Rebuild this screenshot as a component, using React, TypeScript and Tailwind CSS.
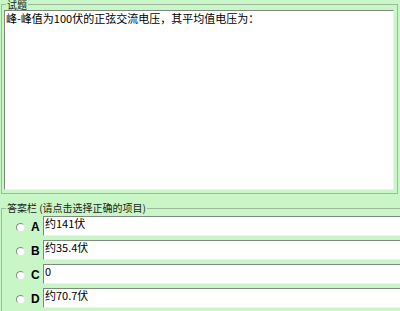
const options = [
  { key: 'A', text: '约141伏' },
  { key: 'B', text: '约35.4伏' },
  { key: 'C', text: '0' },
  { key: 'D', text: '约70.7伏' },
];

function Radio() {
  return (
    <span className="block h-[9px] w-[9px] rounded-full border border-t-[#8a8a8a] border-l-[#8a8a8a] border-r-[#e8e8e8] border-b-[#e8e8e8] bg-white" />
  );
}

export default function App() {
  return (
    <div className="h-[311px] w-[400px] overflow-hidden bg-[#c9f6c6] font-['Noto_Sans_CJK_SC','Noto_Sans',sans-serif] text-[11px] text-black">
      <fieldset className="ml-[1px] mr-[2px] h-[194px] border border-[#9fb89f] px-[2px] pt-[2px]">
        <legend className="ml-[2px] h-[8px] px-[1px] text-[10px] leading-[9px] text-[#222]">试题</legend>
        <div className="h-[180px] w-[390px] border border-t-[#7f8a7f] border-l-[#7f8a7f] border-r-[#e6f7e4] border-b-[#e6f7e4] bg-white px-[1px] leading-[14px]">
          峰-峰值为100伏的正弦交流电压，其平均值电压为：
        </div>
      </fieldset>

      <fieldset className="ml-[1px] mt-[10px] h-[110px] w-[420px] border border-[#9fb89f] pl-[2px] pt-[3px]">
        <legend className="ml-[2px] h-[8px] px-[1px] text-[10px] leading-[8px] text-[#222]">答案栏 (请点击选择正确的项目)</legend>
        <div className="flex flex-col gap-[4px] pt-[1px]">
          {options.map((o) => (
            <div key={o.key} className="flex items-start">
              <div className="flex h-[20px] w-[39px] items-center pl-[12px] pt-[2px]">
                <Radio />
                <span className="ml-[6px] font-['Liberation_Sans',sans-serif] text-[12px] font-bold">{o.key}</span>
              </div>
              <div className="h-[20px] w-[380px] border border-t-[#7f8a7f] border-l-[#7f8a7f] border-r-[#e6f7e4] border-b-[#e6f7e4] bg-white px-[1px] leading-[13px]">
                {o.text}
              </div>
            </div>
          ))}
        </div>
      </fieldset>
    </div>
  );
}
